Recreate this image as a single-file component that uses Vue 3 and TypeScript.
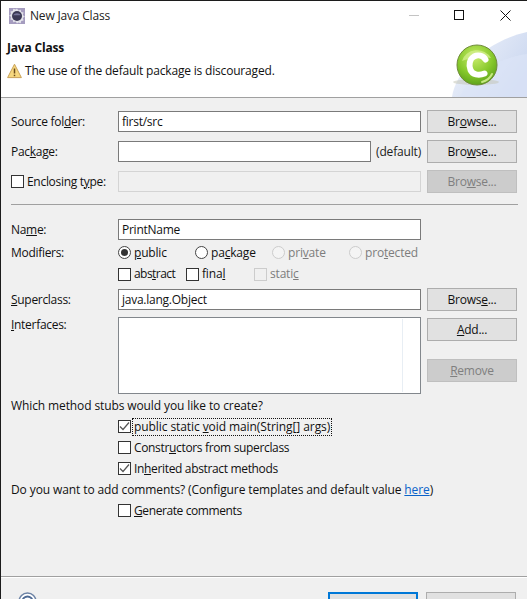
<script setup lang="ts">
const radios = [
  { before: '', key: 'p', after: 'ublic', checked: true, disabled: false },
  { before: 'pa', key: 'c', after: 'kage', checked: false, disabled: false },
  { before: 'pri', key: 'v', after: 'ate', checked: false, disabled: true },
  { before: 'pro', key: 't', after: 'ected', checked: false, disabled: true },
]
const flags = [
  { before: 'abs', key: 't', after: 'ract', disabled: false },
  { before: 'fina', key: 'l', after: '', disabled: false },
  { before: 'stati', key: 'c', after: '', disabled: true },
]
</script>

<template>
  <div class="window">
    <div class="titlebar">
      <svg class="app-icon" width="16" height="16" viewBox="0 0 16 16">
        <rect x="0" y="0" width="16" height="16" fill="#5b4a8a" opacity="0.55" />
        <path d="M8 0.5l1.4 2 2.3-.8.5 2.4 2.4.5-.8 2.3 2 1.6-2 1.6.8 2.3-2.4.5-.5 2.4-2.3-.8L8 15.5l-1.4-2-2.3.8-.5-2.4-2.4-.5.8-2.3-2-1.6 2-1.6-.8-2.3 2.4-.5.5-2.4 2.3.8z" fill="#e4e4ea" />
        <circle cx="8" cy="8" r="5" fill="#3c3a55" />
        <path d="M4.2 7.2a4 3 0 0 1 7.6 0z" fill="#77769a" />
      </svg>
      <span class="title">New Java Class</span>
      <div class="winbtns">
        <span class="win-min"></span>
        <span class="win-max"></span>
        <svg class="win-close" width="11" height="11" viewBox="0 0 11 11">
          <path d="M.5.5l10 10M10.5.5l-10 10" stroke="#111" stroke-width="1" fill="none" />
        </svg>
      </div>
    </div>

    <div class="banner">
      <svg class="banner-art" width="75" height="67" viewBox="0 0 75 67">
        <defs>
          <linearGradient id="wash" x1="0" y1="0" x2="1" y2="0.6">
            <stop offset="0" stop-color="#f2f5fc" />
            <stop offset="1" stop-color="#ccd8f0" />
          </linearGradient>
          <radialGradient id="ball" cx="0.45" cy="0.3" r="0.8">
            <stop offset="0" stop-color="#c9ec6a" />
            <stop offset="0.55" stop-color="#86c82c" />
            <stop offset="1" stop-color="#4f9415" />
          </radialGradient>
        </defs>
        <path d="M0 67C4 38 38 10 75 2V67z" fill="url(#wash)" />
        <path d="M8 67C14 50 42 28 75 24V67z" fill="#dbe4f6" opacity="0.7" />
        <ellipse cx="24" cy="52" rx="23" ry="3" fill="#c4c6b8" opacity="0.55" />
      </svg>
      <svg class="banner-logo" width="42" height="42" viewBox="0 0 42 42">
        <circle cx="21" cy="21" r="20" fill="url(#ball)" stroke="#6f8a3a" stroke-width="1" />
        <path d="M6 17a15.500 14 0 0 1 29-3c-8-2-22 0-29 3z" fill="#d4f08e" opacity="0.75" />
        <path d="M29.500 15.500C27 11.500 22 10.500 18 12.500 13.500 15 12.500 21 14.500 26c2 4.500 8 6 14 3.500" fill="none" stroke="#ffffff" stroke-width="6" stroke-linecap="round" />
        <path d="M36 30a16 14 0 0 1-10 8" fill="none" stroke="#c6e882" stroke-width="2" stroke-linecap="round" />
      </svg>
      <div class="banner-title">Java Class</div>
      <div class="banner-msg">
        <svg width="15" height="16" viewBox="0 0 15 16">
          <path d="M7.500 1.200L14.400 14.600H.6z" fill="#f6d77e" stroke="#c9a25a" stroke-width="1" stroke-linejoin="round" />
          <path d="M7.500 5.500v5" stroke="#6b4a1c" stroke-width="1.500" />
          <path d="M7.500 11.700v1.500" stroke="#6b4a1c" stroke-width="1.500" />
        </svg>
        <span>The use of the default package is discouraged.</span>
      </div>
    </div>

    <div class="form">
      <div class="row">
        <label>Source fol<u>d</u>er:</label>
        <span class="input">first/src</span>
        <button class="btn">Br<u>o</u>wse...</button>
      </div>
      <div class="row">
        <label>Pac<u>k</u>age:</label>
        <div class="pkg">
          <span class="input"></span>
          <span class="pkg-note">(default)</span>
        </div>
        <button class="btn">Bro<u>w</u>se...</button>
      </div>
      <div class="row">
        <label class="check"><i class="box"></i><span>Enclosing t<u>y</u>pe:</span></label>
        <span class="input off"></span>
        <button class="btn off">Bro<u>w</u>se...</button>
      </div>

      <div class="rule"></div>

      <div class="row">
        <label>Na<u>m</u>e:</label>
        <span class="input">PrintName</span>
      </div>
      <div class="row mods">
        <label>Modifiers:</label>
        <div class="radios">
          <span v-for="r in radios" :key="r.after" class="opt" :class="{ dim: r.disabled }">
            <i class="radio" :class="{ on: r.checked }"></i>
            <span>{{ r.before }}<u>{{ r.key }}</u>{{ r.after }}</span>
          </span>
        </div>
      </div>
      <div class="row flags-row">
        <span></span>
        <div class="flags">
          <span v-for="f in flags" :key="f.before" class="opt" :class="{ dim: f.disabled }">
            <i class="box"></i>
            <span>{{ f.before }}<u>{{ f.key }}</u>{{ f.after }}</span>
          </span>
        </div>
      </div>
      <div class="row super">
        <label><u>S</u>uperclass:</label>
        <span class="input">java.lang.Object</span>
        <button class="btn">Brows<u>e</u>...</button>
      </div>
      <div class="row ifaces">
        <label><u>I</u>nterfaces:</label>
        <div class="list"><div class="list-pane"></div></div>
        <div class="list-btns">
          <button class="btn"><u>A</u>dd...</button>
          <button class="btn off"><u>R</u>emove</button>
        </div>
      </div>

      <div class="line stubs-q">Which method stubs would you like to create?</div>
      <div class="stub">
        <i class="box"><svg width="11" height="11" viewBox="0 0 11 11"><path d="M1 5.500l3 3 6-7" fill="none" stroke="#555" stroke-width="1.200" /></svg></i>
        <span class="focus">public static <u>v</u>oid main(String[] args)</span>
      </div>
      <div class="stub">
        <i class="box"></i>
        <span class="txt">Constr<u>u</u>ctors from superclass</span>
      </div>
      <div class="stub">
        <i class="box"><svg width="11" height="11" viewBox="0 0 11 11"><path d="M1 5.500l3 3 6-7" fill="none" stroke="#555" stroke-width="1.200" /></svg></i>
        <span class="txt">In<u>h</u>erited abstract methods</span>
      </div>
      <div class="line comments-q">Do you want to add comments? (Configure templates and default value <a class="link">here</a>)</div>
      <div class="stub">
        <i class="box"></i>
        <span class="txt gen"><u>G</u>enerate comments</span>
      </div>
    </div>

    <div class="footer">
      <svg class="help" width="19" height="19" viewBox="0 0 19 19">
        <circle cx="9.500" cy="9.500" r="8.500" fill="#fff" stroke="#6d83a5" stroke-width="1.500" />
        <circle cx="9.500" cy="9.500" r="5" fill="none" stroke="#4e6a94" stroke-width="2" />
      </svg>
      <div class="footer-btns">
        <button class="btn primary"></button>
        <button class="btn plain"></button>
      </div>
    </div>
  </div>
</template>

<style>
html, body { margin: 0; background: #f0f0f0; }
</style>

<style scoped>
.window {
  width: 527px;
  height: 599px;
  box-sizing: border-box;
  overflow: hidden;
  border-top: 1px solid #1c1c1c;
  border-left: 1px solid #1c1c1c;
  background: #f0f0f0;
  color: #111;
  font: 12px/16px "Open Sans", "Noto Sans", sans-serif;
  letter-spacing: -0.18px;
  display: flex;
  flex-direction: column;
}
.titlebar {
  height: 29px;
  background: #fff;
  display: flex;
  align-items: center;
  padding-left: 8px;
  position: relative;
}
.title { margin-left: 5px; color: #222; }
.winbtns { position: absolute; left: 0; top: 0; width: 100%; height: 100%; }
.win-min { position: absolute; left: 408px; top: 14px; width: 10px; height: 1px; background: #c4c4c4; }
.win-max { position: absolute; left: 453px; top: 9px; width: 8px; height: 8px; border: 1px solid #111; }
.win-close { position: absolute; left: 499px; top: 9px; }
.banner {
  height: 67px;
  box-sizing: border-box;
  background: #fff;
  position: relative;
  padding: 10px 0 0 6px;
}
.banner-art { position: absolute; right: 0; top: 0; }
.banner-logo { position: absolute; left: 455px; top: 14px; }
.banner-title { font-weight: 700; position: relative; }
.banner-msg {
  display: flex;
  align-items: center;
  gap: 3px;
  margin-top: 7px;
  position: relative;
}
.form {
  border-top: 1px solid #a0a0a0;
  padding: 12px 9px 0 10px;
  height: 479px;
  box-sizing: border-box;
  display: flex;
  flex-direction: column;
}
.row {
  display: grid;
  grid-template-columns: 101px 303px 90px;
  column-gap: 6px;
  align-items: center;
  height: 23px;
  margin-bottom: 7px;
}
label { display: block; letter-spacing: -0.3px; }
u { text-underline-offset: 1px; }
.input {
  display: block;
  box-sizing: border-box;
  height: 21px;
  background: #fff;
  border: 1px solid #7a7a7a;
  padding: 1px 3px;
  line-height: 17px;
  letter-spacing: -0.25px;
}
.input.off { background: #f0f0f0; border-color: #d4d4d4; }
.btn {
  height: 23px;
  width: 90px;
  box-sizing: border-box;
  background: #e1e1e1;
  border: 1px solid #adadad;
  padding: 0;
  font: inherit;
  letter-spacing: -0.25px;
  color: #111;
}
.btn.off { background: #ccc; border-color: #bfbfbf; color: #7f7f7f; }
.check { display: flex; align-items: center; gap: 3px; }
.box {
  display: flex;
  align-items: center;
  justify-content: center;
  flex: none;
  width: 13px;
  height: 13px;
  box-sizing: border-box;
  background: #fff;
  border: 1px solid #333;
}
.pkg { display: flex; align-items: center; justify-content: space-between; }
.pkg .input { width: 253px; }
.pkg-note { color: #222; }
.rule { height: 1px; background: #a0a0a0; margin: 4px 0 13px; width: 507px; }
.mods { height: 21px; margin: -6px 0 0; }
.flags-row { height: 22px; margin: 0 0 3px; }
.radios, .flags { display: flex; }
.opt { display: flex; flex: none; align-items: center; gap: 3px; white-space: nowrap; }
.radios .opt { width: 77px; }
.flags .opt { width: 68px; }
.flags .opt:first-child { letter-spacing: -0.55px; }
.dim { color: #7d7d7d; }
.dim .box { border-color: #ccc; background: #f0f0f0; }
.radio {
  flex: none;
  width: 13px;
  height: 13px;
  box-sizing: border-box;
  border-radius: 50%;
  border: 1px solid #444;
  background: #fff;
  position: relative;
}
.radio.on::after {
  content: "";
  position: absolute;
  left: 2px;
  top: 2px;
  width: 7px;
  height: 7px;
  border-radius: 50%;
  background: #333;
}
.dim .radio { border-color: #ccc; background: #f4f4f4; }
.super { margin-bottom: 6px; }
.ifaces { height: 77px; align-items: start; margin-bottom: 2px; }
.list {
  height: 77px;
  box-sizing: border-box;
  background: #fff;
  border: 1px solid #82878c;
  padding: 1px;
}
.list-pane { height: 100%; width: 282px; border-right: 1px solid #e8eef4; }
.list-btns { display: flex; flex-direction: column; gap: 18px; padding-top: 1px; }
.line { height: 21px; line-height: 21px; white-space: nowrap; }
.stubs-q { height: 20px; line-height: 20px; letter-spacing: -0.11px; }
.comments-q { letter-spacing: -0.105px; }
.stub { height: 21px; display: flex; align-items: center; padding-left: 107px; gap: 2px; white-space: nowrap; }
.txt { margin-left: 1px; letter-spacing: -0.34px; }
.txt.gen { letter-spacing: -0.4px; }
.focus { outline: 1px dotted #111; outline-offset: 0; padding: 0 1px; letter-spacing: -0.08px; }
.link { color: #0a62c9; text-decoration: underline; }
.footer {
  flex: 1;
  border-top: 1px solid #a0a0a0;
  box-shadow: inset 0 1px 0 #fff;
  position: relative;
}
.help { position: absolute; left: 17px; top: 15px; }
.footer-btns { position: absolute; left: 327px; top: 15px; display: flex; gap: 8px; }
.btn.primary { border: 2px solid #0078d7; }
</style>
